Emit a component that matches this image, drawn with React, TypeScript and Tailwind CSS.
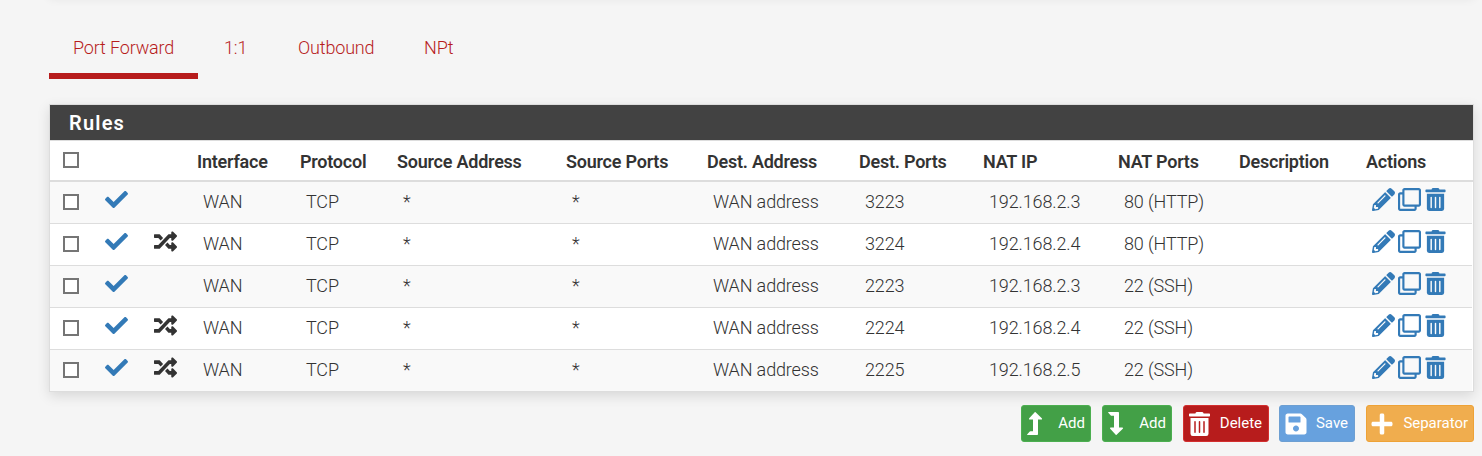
import type { ReactNode } from "react";
import { FaCheck, FaPencilAlt, FaPlus, FaRandom, FaRegClone, FaSave, FaTrashAlt } from "react-icons/fa";

type Rule = {
  linked: boolean;
  destPort: string;
  natIp: string;
  natPort: string;
};

const rules: Rule[] = [
  { linked: false, destPort: "3223", natIp: "192.168.2.3", natPort: "80 (HTTP)" },
  { linked: true, destPort: "3224", natIp: "192.168.2.4", natPort: "80 (HTTP)" },
  { linked: false, destPort: "2223", natIp: "192.168.2.3", natPort: "22 (SSH)" },
  { linked: true, destPort: "2224", natIp: "192.168.2.4", natPort: "22 (SSH)" },
  { linked: true, destPort: "2225", natIp: "192.168.2.5", natPort: "22 (SSH)" },
];

const columns =
  "grid grid-cols-[55px_48px_44px_103px_97px_169px_141px_152px_124px_135px_121px_127px_1fr] items-center whitespace-nowrap";

function Checkbox() {
  return <span className="mb-0.5 ml-[13px] block size-4 border-2 border-[#757575] bg-white" />;
}

function LevelArrow({ className }: { className: string }) {
  return (
    <svg viewBox="0 0 16 23" fill="currentColor" className={className}>
      <path d="M8.6.3 14.8 6.2Q15.6 7.6 14.2 7.6H11V22.2Q11 23 10.2 23H.6Q-.2 23 .3 22.3L2.8 19.6Q3 19.3 3.5 19.3H6V7.6H2.8Q1.5 7.6 2.2 6.2L7.7.3Q8.2-.1 8.6.3Z" />
    </svg>
  );
}

function Tab({ children, className }: { children: ReactNode; className: string }) {
  return (
    <a className={`flex h-[63px] items-center border-b-6 pt-[5px] ${className}`}>{children}</a>
  );
}

function Button({ icon, label, className }: { icon: ReactNode; label: string; className: string }) {
  return (
    <button
      className={`flex h-[37px] items-center justify-between rounded-[3px] border pl-[5px] text-[15px] tracking-[-0.02px] text-white ${className}`}
    >
      {icon}
      <span>{label}</span>
    </button>
  );
}

export default function App() {
  return (
    <div className="flex h-[456px] w-[1482px] flex-col overflow-hidden bg-[#f5f5f5] font-[Roboto,sans-serif] text-[#333]">
      <div className="h-4 shrink-0 pl-[49px]">
        <div className="-mt-[13px] h-2 w-[1425px] shadow-[0_4px_10px_rgba(0,0,0,0.07)]" />
      </div>
      <nav className="ml-[49px] flex text-[18px] font-[350] tracking-[-0.16px] text-[#b71c1c]">
        <Tab className="w-[149px] border-[#b71c1c] pl-6">Port Forward</Tab>
        <Tab className="w-[75px] border-transparent pl-[26px]">1:1</Tab>
        <Tab className="w-[126px] border-transparent pl-[25px]">Outbound</Tab>
        <Tab className="border-transparent pl-[25px]">NPt</Tab>
      </nav>
      <section className="mt-[25px] ml-[49px] w-[1425px] border border-[#ddd] bg-white shadow-[0_4px_12px_rgba(0,0,0,0.12)]">
        <h2 className="flex h-[35px] items-center bg-[#424242] pt-px pl-[19px] text-[20px] font-semibold tracking-[1.2px] text-white">
          Rules
        </h2>
        <div className={`${columns} h-[42px] border-t border-b-2 border-[#ddd] text-[18px] font-semibold tracking-[-0.23px]`}>
          <Checkbox />
          <span />
          <span />
          <span className="pt-px">Interface</span>
          <span className="pt-px">Protocol</span>
          <span className="pt-px">Source Address</span>
          <span className="pt-px">Source Ports</span>
          <span className="pt-px">Dest. Address</span>
          <span className="pt-px">Dest. Ports</span>
          <span className="pt-px">NAT IP</span>
          <span className="pt-px">NAT Ports</span>
          <span className="pt-px">Description</span>
          <span className="pt-px">Actions</span>
        </div>
        <div className="mr-px divide-y divide-[#ddd]">
          {rules.map((rule) => (
            <div
              key={rule.destPort}
              className={`${columns} h-[42px] text-[18px] font-[350] tracking-[-0.14px] odd:bg-[#f9f9f9] last:h-[41px]`}
            >
              <Checkbox />
              <FaCheck className="mb-1.5 size-[23px] text-[#337ab7]" />
              {rule.linked ? <FaRandom className="mb-[7px] ml-px size-[23px]" /> : <span />}
              <span className="pb-0.5 pl-1.5">WAN</span>
              <span className="pb-0.5 pl-1.5">TCP</span>
              <span className="pb-0.5 pl-1.5">*</span>
              <span className="pb-0.5 pl-1.5">*</span>
              <span className="pb-0.5 pl-1.5">WAN address</span>
              <span className="pb-0.5 pl-1.5">{rule.destPort}</span>
              <span className="pb-0.5 pl-1.5">{rule.natIp}</span>
              <span className="pb-0.5 pl-1.5">{rule.natPort}</span>
              <span />
              <span className="mb-[7px] flex items-center gap-[3px] pl-1.5 text-[#337ab7]">
                <FaPencilAlt className="size-[23px]" />
                <FaRegClone className="size-[23px]" />
                <FaTrashAlt className="ml-px h-[23px] w-[21px]" />
              </span>
            </div>
          ))}
        </div>
      </section>
      <div className="mt-[13px] ml-[1021px] flex">
        <Button
          icon={<LevelArrow className="h-[23px] w-4" />}
          label="Add"
          className="mr-[11px] w-[70px] border-[#4caf50] bg-[#43a047] pr-[5px]"
        />
        <Button
          icon={<LevelArrow className="h-[23px] w-4 -scale-y-100" />}
          label="Add"
          className="mr-[11px] w-[70px] border-[#4caf50] bg-[#43a047] pr-[5px]"
        />
        <Button
          icon={<FaTrashAlt className="h-6 w-[21px]" />}
          label="Delete"
          className="mr-2.5 w-[86px] border-[#d32f2f] bg-[#b71c1c] pr-1.5"
        />
        <Button
          icon={<FaSave className="h-6 w-[22px]" />}
          label="Save"
          className="mr-[11px] w-[76px] border-[#6d9fd2] bg-[#67a1de] pr-1.5"
        />
        <Button
          icon={<FaPlus className="-ml-px h-6 w-[22px]" />}
          label="Separator"
          className="w-[108px] border-[#eea236] bg-[#f0ad4e] pr-[5px]"
        />
      </div>
    </div>
  );
}
